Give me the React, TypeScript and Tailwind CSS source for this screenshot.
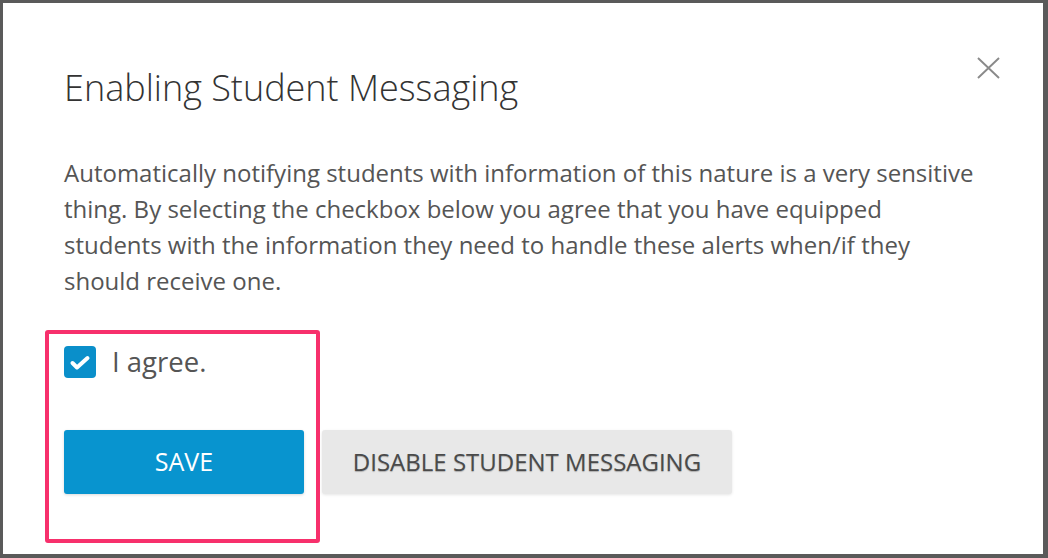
import React from "react";

export default function App() {
  return (
    <div className="w-[1048px] h-[558px] bg-[#5a5a5a] pt-[3px] pl-[3px] pr-[5px] pb-[4px] [font-family:'Open_Sans',sans-serif]">
      <div className="relative w-full h-full bg-white pl-[61px] pr-[40px]">
        <button className="absolute left-[970px] top-[50px] w-[30px] h-[30px] flex items-center justify-center text-[#8a8a8a]">
          <svg width="23" height="22" viewBox="0 0 24 23" fill="none" stroke="currentColor" strokeWidth="2">
            <path d="M1 1 L23 22 M23 1 L1 22" />
          </svg>
        </button>
        <h1 className="pt-[62px] text-[36px] leading-[46px] font-light text-[#333]">
          Enabling Student Messaging
        </h1>
        <p className="mt-[44px] text-[24px] leading-[36px] text-[#555] max-w-[912px]">
          Automatically notifying students with information of this nature is a very sensitive thing. By selecting the checkbox below you agree that you have equipped students with the information they need to handle these alerts when/if they should receive one.
        </p>
        <label className="mt-[47px] flex items-center gap-[16px]">
          <span className="w-[32px] h-[32px] rounded-[4px] bg-[#0a8fca] flex items-center justify-center">
            <svg width="32" height="32" viewBox="0 0 32 32" fill="none" stroke="white" strokeWidth="4" strokeLinecap="round" strokeLinejoin="round">
              <path d="M8.5 17 L13 21.5 L23.5 12" />
            </svg>
          </span>
          <span className="text-[27.5px] leading-[32px] text-[#555]">I agree.</span>
        </label>
        <div className="mt-[52px] flex gap-[18px]">
          <button className="w-[240px] h-[64px] rounded-[3px] bg-[#0894cf] text-white text-[25px] shadow-[0_1px_3px_rgba(0,0,0,0.15)]">
            SAVE
          </button>
          <button className="w-[410px] h-[64px] rounded-[3px] bg-[#e8e8e8] text-[#4a4a4a] text-[24px] [text-shadow:0_1px_1px_rgba(0,0,0,0.25)] shadow-[0_1px_3px_rgba(0,0,0,0.1)]">
            DISABLE STUDENT MESSAGING
          </button>
        </div>
        <div className="absolute left-[42px] top-[327px] w-[275px] h-[213px] border-[4px] border-[#f7306c] rounded-[3px] pointer-events-none" />
      </div>
    </div>
  );
}
